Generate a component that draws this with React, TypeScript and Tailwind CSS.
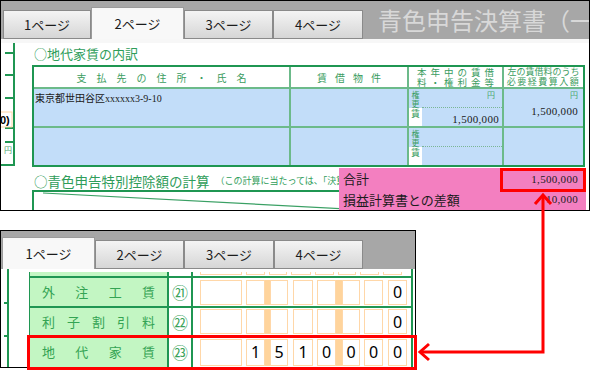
import React from "react";

const jp = "font-['Noto_Sans_CJK_JP',sans-serif]";
const serif = "font-['Liberation_Serif','Noto_Sans_CJK_JP',serif]";

function Tab({ label, w, active = false }: { label: string; w: string; active?: boolean }) {
  return (
    <div
      className={`${w} ${
        active
          ? "h-[32px] bg-[#f8f8f8] border-[#9b9b9b]"
          : "h-[29px] bg-linear-to-b from-[#f4f4f4] to-[#d6d6d6] border-b border-[#8a8a8a]"
      } shrink-0 border-t border-l border-r flex items-center justify-center text-[13px] text-[#1c1c1c] ${jp}`}
    >
      {label}
    </div>
  );
}

function TopPanel() {
  return (
    <div className="w-[590px] h-[211px] border border-black overflow-hidden bg-white">
      <div className="h-[38px] bg-[#a7a7a7] flex items-end pl-[2px]">
        <Tab label="1ページ" w="w-[88px]" />
        <Tab label="2ページ" w="w-[93px]" active />
        <Tab label="3ページ" w="w-[89px]" />
        <Tab label="4ページ" w="w-[90px]" />
        <div className={`self-center ml-[15px] text-[24px] leading-none text-[#d8d8d8] whitespace-nowrap ${jp}`}>
          青色申告決算書（一
        </div>
      </div>
      <div className="h-[4px] bg-[#f7f7f7]" />
      <div className="flex">
        <div className="w-[31px] shrink-0">
          <svg width="31" height="167">
            <line x1="13" y1="0" x2="13" y2="123" stroke="#1f9652" strokeWidth="2" />
            {[10, 32, 55, 85, 99].map((y) => (
              <line key={y} x1="4" y1={y} x2="13" y2={y} stroke="#1f9652" strokeWidth="2" />
            ))}
            <line x1="0" y1="122" x2="13" y2="122" stroke="#1f9652" strokeWidth="2" />
            <rect x="-1" y="69" width="12" height="15" fill="#fff" stroke="#ffd6a6" />
            <text x="-1" y="81" fontSize="11" fontWeight="bold" fontFamily="Liberation Sans">0)</text>
            <text x="3" y="110" fontSize="8" fill="#4aa86e" fontFamily="Noto Sans CJK JP">円</text>
          </svg>
        </div>
        <div className="w-[557px] pt-[2px]">
          <div className={`h-[18px] leading-[18px] text-[13px] text-[#2f9d5a] pl-[2px] ${jp}`}>○地代家賃の内訳</div>
          <div className="mt-[2px] w-[553px] border-2 border-[#1f9652] bg-[#6cba8a] grid grid-cols-[255px_116px_93px_79px] grid-rows-[20px_37px_37px] gap-[2px]">
            <div className={`bg-white flex items-center justify-center text-[10px] text-[#3a9c60] tracking-[10px] pl-[10px] ${jp}`}>
              支払先の住所・氏名
            </div>
            <div className={`bg-white flex items-center justify-center text-[10px] text-[#3a9c60] tracking-[8px] pl-[8px] ${jp}`}>
              賃借物件
            </div>
            <div className={`bg-white flex flex-col items-center justify-center text-[9.5px] leading-[10px] text-[#3a9c60] tracking-[4px] pl-[4px] ${jp}`}>
              <span>本年中の賃借</span>
              <span>料・権利金等</span>
            </div>
            <div className={`bg-white flex flex-col items-center justify-center text-[9px] leading-[10px] text-[#3a9c60] ${jp}`}>
              <span>左の賃借料のうち</span>
              <span className="tracking-[1.5px]">必要経費算入額</span>
            </div>

            {[0, 1].map((r) => (
              <React.Fragment key={r}>
                <div className={`bg-[#c2ddf9] pl-[1px] pt-[4px] text-[10px] leading-[12px] text-[#1a1a1a] ${serif}`}>
                  {r === 0 ? "東京都世田谷区xxxxxx3-9-10" : ""}
                </div>
                <div className="bg-[#c2ddf9]" />
                <div className="bg-[#c2ddf9] flex">
                  <div className={`w-[13px] flex flex-col text-[8px] leading-[9px] text-[#3a9c60] ${jp}`}>
                    <div className="h-[19px] flex flex-col items-center pt-[1px]">
                      <span>権</span>
                      <span>更</span>
                    </div>
                    <div className="flex-1 bg-white flex justify-center pt-[1px] text-[9px]">賃</div>
                  </div>
                  <div className="flex-1 flex flex-col">
                    <div className={`h-[19px] border-b border-dotted border-[#7ab695] flex justify-end pr-[7px] pt-[1px] text-[8px] leading-[10px] text-[#4aa86e] ${jp}`}>
                      {r === 0 ? "円" : ""}
                    </div>
                    <div className={`flex-1 flex items-end justify-end pr-[3px] pb-[1px] text-[11px] leading-[12px] tracking-[0.3px] text-[#1a1a1a] ${serif}`}>
                      {r === 0 ? "1,500,000" : ""}
                    </div>
                  </div>
                </div>
                <div className="bg-[#c2ddf9] flex flex-col items-end pr-[5px] pt-[1px]">
                  {r === 0 && (
                    <>
                      <span className={`text-[8px] leading-[10px] text-[#4aa86e] ${jp}`}>円</span>
                      <span className={`mt-[5px] text-[11px] leading-[12px] tracking-[0.3px] text-[#1a1a1a] ${serif}`}>1,500,000</span>
                    </>
                  )}
                </div>
              </React.Fragment>
            ))}
          </div>
          <div className={`mt-[5px] h-[18px] flex items-center whitespace-nowrap overflow-hidden pl-[2px] text-[#2f9d5a] ${jp}`}>
            <span className="text-[13.5px]">○青色申告特別控除額の計算</span>
            <span className="ml-[6px] text-[9px]">（この計算に当たっては、「決算の</span>
          </div>
          <div className="w-[553px] h-[22px] border-t-2 border-l-2 border-r-2 border-[#1f9652]">
            <svg width="549" height="20">
              <line x1="9" y1="1" x2="370" y2="20" stroke="#3aa064" strokeWidth="1.2" />
              <line x1="421" y1="2" x2="421" y2="20" stroke="#3aa064" strokeWidth="1" />
            </svg>
          </div>
        </div>
      </div>
    </div>
  );
}

function Box({ w, h, digit, gap = "" }: { w: string; h: string; digit?: string; gap?: string }) {
  return (
    <div
      className={`${w} ${h} ${gap} shrink-0 bg-white border border-[#ffd7a8] flex items-center justify-center text-[16px] text-black font-['Noto_Sans',sans-serif]`}
    >
      {digit}
    </div>
  );
}

function Strip({ w, h }: { w: string; h: string }) {
  return <div className={`${w} ${h} shrink-0 bg-[#ffd49c]`} />;
}

function Values({ d, h }: { d: string[]; h: string }) {
  return (
    <div className="flex-1 flex items-center pl-[7px]">
      <Box w="w-[42px]" h={h} digit={d[0]} />
      <Box w="w-[19px]" h={h} digit={d[1]} gap="ml-[4px]" />
      <Strip w="w-[5px]" h={h} />
      <Box w="w-[18px]" h={h} digit={d[2]} />
      <Box w="w-[20px]" h={h} digit={d[3]} gap="ml-[5px]" />
      <Box w="w-[19px]" h={h} digit={d[4]} gap="ml-[4px]" />
      <Strip w="w-[6px]" h={h} />
      <Box w="w-[18px]" h={h} digit={d[5]} />
      <Box w="w-[19px]" h={h} digit={d[6]} gap="ml-[4px]" />
      <Box w="w-[19px]" h={h} digit={d[7]} gap="ml-[5px]" />
    </div>
  );
}

const rows = [
  { label: ["外", "注", "工", "賃"], no: "㉑", d: ["", "", "", "", "", "", "", "0"], h: "h-[30px]", box: "h-[25px]", border: true },
  { label: ["利", "子", "割", "引", "料"], no: "㉒", d: ["", "", "", "", "", "", "", "0"], h: "h-[29px]", box: "h-[25px]", border: true },
  { label: ["地", "代", "家", "賃"], no: "㉓", d: ["", "1", "5", "1", "0", "0", "0", "0"], h: "h-[30px]", box: "h-[27px]", border: false },
];

function BottomPanel() {
  return (
    <div className="mt-[19px] w-[416px] h-[138px] border border-black bg-white overflow-hidden">
      <div className="h-[38px] bg-[#a7a7a7] flex items-end pl-[1px]">
        <Tab label="1ページ" w="w-[93px]" active />
        <Tab label="2ページ" w="w-[89px]" />
        <Tab label="3ページ" w="w-[90px]" />
        <Tab label="4ページ" w="w-[89px]" />
      </div>
      <div className="flex h-[98px]">
        <div className="w-[28px] shrink-0">
          <svg width="28" height="98">
            <line x1="7" y1="0" x2="7" y2="98" stroke="#1f9652" strokeWidth="2" />
            <line x1="3" y1="34" x2="7" y2="34" stroke="#1f9652" strokeWidth="2" />
            <line x1="3" y1="67" x2="7" y2="67" stroke="#1f9652" strokeWidth="2" />
          </svg>
        </div>
        <div className="w-[384px] pt-[3px] border-r-2 border-[#1f9652]">
          <div className="h-[6px] flex border-b-2 border-l border-[#1f9652]">
            <div className="w-[139px] bg-[#c3f6c3] border-r-2 border-[#1f9652]" />
            <div className="w-[24px] border-r-2 border-[#1f9652]" />
            <div className="flex-1 flex items-start pl-[7px] gap-[4px]">
              {[42, 19, 18, 20, 19, 18, 19, 19].map((w, i) => (
                <div key={i} className="h-[3px] border-x border-b border-[#ffd7a8]" style={{ width: w }} />
              ))}
            </div>
          </div>
          {rows.map((r) => (
            <div key={r.no} className={`${r.h} flex border-l border-[#1f9652] ${r.border ? "border-b-2" : ""}`}>
              <div className={`w-[139px] shrink-0 bg-[#c3f6c3] border-r-2 border-[#1f9652] flex items-center justify-between px-[12px] text-[13px] text-[#34a453] ${jp}`}>
                {r.label.map((c, i) => (
                  <span key={i}>{c}</span>
                ))}
              </div>
              <div className={`w-[24px] shrink-0 border-r-2 border-[#1f9652] flex items-center justify-center text-[16px] leading-none text-[#3aa35a] ${jp}`}>
                {r.no}
              </div>
              <Values d={r.d} h={r.box} />
            </div>
          ))}
        </div>
      </div>
    </div>
  );
}

export default function App() {
  return (
    <div className="relative w-[590px] h-[370px] bg-white overflow-hidden">
      <TopPanel />
      <BottomPanel />

      {/* popup over the first page */}
      <div className={`absolute left-[339px] top-[168px] w-[247px] h-[42px] bg-[#f37fc0] text-[#1c1c1c] ${jp}`}>
        <div className="h-[22px] flex items-center justify-between pl-[4px] pr-[8px]">
          <span className="text-[13px]">合計</span>
          <span className={`text-[11px] tracking-[0.3px] ${serif}`}>1,500,000</span>
        </div>
        <div className="h-[19px] flex items-center justify-between pl-[4px] pr-[8px]">
          <span className="text-[13px]">損益計算書との差額</span>
          <span className={`text-[11px] tracking-[0.3px] ${serif}`}>10,000</span>
        </div>
      </div>
      <div className="absolute left-[500px] top-[168px] w-[86px] h-[24px] border-[3px] border-[#ff0000]" />
      <div className="absolute left-[27px] top-[335px] w-[390px] h-[35px] border-[3px] border-[#ff0000]" />

      <svg className="absolute inset-0 pointer-events-none" width="590" height="370">
        <polyline points="543,195 543,352 420,352" fill="none" stroke="#ff0000" strokeWidth="3" />
        <polyline points="535,204 543,195 551,204" fill="none" stroke="#ff0000" strokeWidth="3" />
        <polyline points="429,344 420,352 429,360" fill="none" stroke="#ff0000" strokeWidth="3" />
      </svg>
    </div>
  );
}
